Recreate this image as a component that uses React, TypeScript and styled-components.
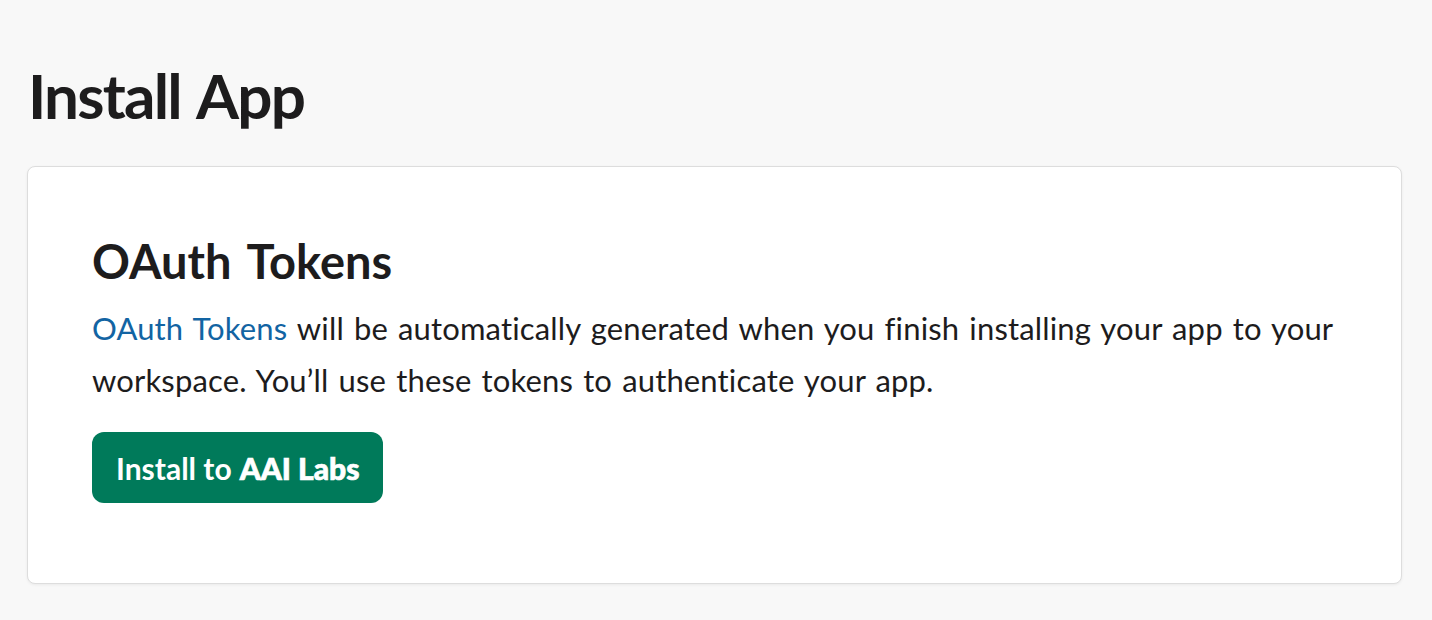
import React from "react";
import styled, { createGlobalStyle } from "styled-components";

const Global = createGlobalStyle`
  html, body { margin: 0; padding: 0; background: #f8f8f8; }
  body { font-family: Lato, "Noto Sans", sans-serif; color: #1d1c1d; }
`;

const Page = styled.div`
  padding: 53px 30px 36px 27px;
  display: flex;
  flex-direction: column;
`;

const Title = styled.h1`
  margin: 0 0 29px 1px;
  font-size: 62px;
  line-height: 84px;
  font-weight: 700;
  letter-spacing: -1.8px;
  word-spacing: 4px;
`;

const Card = styled.section`
  background: #ffffff;
  border: 1px solid #dddddd;
  border-radius: 8px;
  box-shadow: 0 1px 3px rgba(0, 0, 0, 0.06);
  padding: 66px 64px 80px 64px;
  display: flex;
  flex-direction: column;
  align-items: flex-start;
`;

const Heading = styled.h2`
  margin: 0 0 13px;
  font-size: 47px;
  line-height: 56px;
  font-weight: 700;
  word-spacing: 5px;
`;

const Text = styled.p`
  margin: 0 0 26px;
  font-size: 31px;
  line-height: 52px;
  font-weight: 400;
  letter-spacing: 0.15px;
  word-spacing: 2px;
`;

const Link = styled.a`
  color: #1264a3;
  text-decoration: none;
`;

const Button = styled.button`
  display: inline-flex;
  align-items: center;
  height: 71px;
  padding: 0 24px;
  background: #007a5a;
  color: #ffffff;
  border: none;
  border-radius: 12px;
  font-family: Lato, "Noto Sans", sans-serif;
  font-size: 30px;
  font-weight: 700;
  cursor: pointer;
`;

const Strong = styled.span`
  font-weight: 900;
  margin-left: 8px;
  -webkit-text-stroke: 0.7px #ffffff;
`;

export default function App() {
  return (
    <>
      <Global />
      <Page>
        <Title>Install App</Title>
        <Card>
          <Heading>OAuth Tokens</Heading>
          <Text>
            <Link href="#">OAuth Tokens</Link> will be automatically generated when you finish installing your app to your workspace. You’ll use these tokens to authenticate your app.
          </Text>
          <Button>
            Install to<Strong>AAI Labs</Strong>
          </Button>
        </Card>
      </Page>
    </>
  );
}
